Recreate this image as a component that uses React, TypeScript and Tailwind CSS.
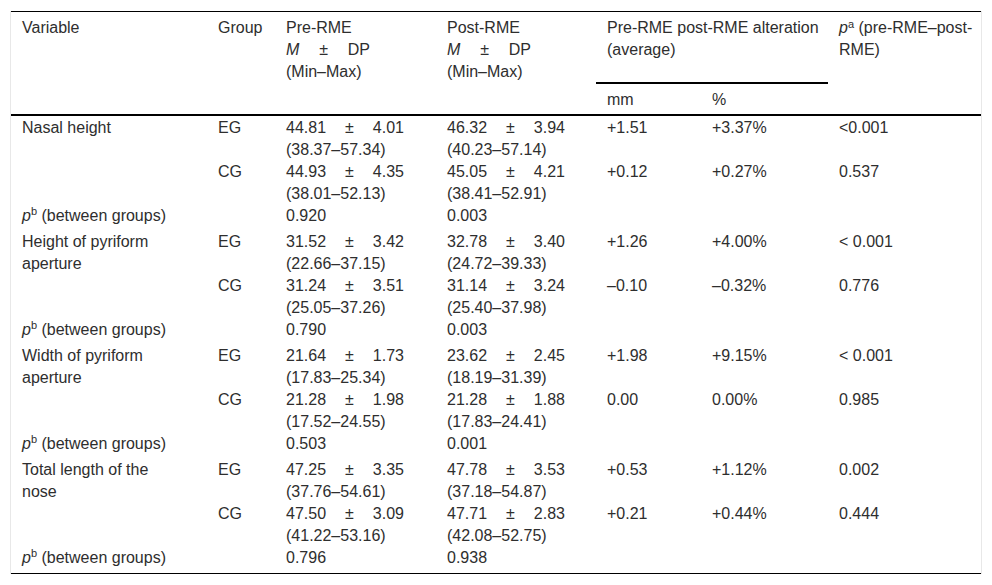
import React from 'react';

type Stat = { m: string; sd: string; range: string };
type GroupRow = { group: string; pre: Stat; post: Stat; mm: string; pct: string; p: string };
type Variable = { name: React.ReactNode; key: string; rows: GroupRow[]; pPre: string; pPost: string };

const data: Variable[] = [
  {
    key: 'nasal',
    name: 'Nasal height',
    rows: [
      { group: 'EG', pre: { m: '44.81', sd: '4.01', range: '(38.37–57.34)' }, post: { m: '46.32', sd: '3.94', range: '(40.23–57.14)' }, mm: '+1.51', pct: '+3.37%', p: '<0.001' },
      { group: 'CG', pre: { m: '44.93', sd: '4.35', range: '(38.01–52.13)' }, post: { m: '45.05', sd: '4.21', range: '(38.41–52.91)' }, mm: '+0.12', pct: '+0.27%', p: '0.537' },
    ],
    pPre: '0.920',
    pPost: '0.003',
  },
  {
    key: 'height',
    name: 'Height of pyriform aperture',
    rows: [
      { group: 'EG', pre: { m: '31.52', sd: '3.42', range: '(22.66–37.15)' }, post: { m: '32.78', sd: '3.40', range: '(24.72–39.33)' }, mm: '+1.26', pct: '+4.00%', p: '< 0.001' },
      { group: 'CG', pre: { m: '31.24', sd: '3.51', range: '(25.05–37.26)' }, post: { m: '31.14', sd: '3.24', range: '(25.40–37.98)' }, mm: '–0.10', pct: '–0.32%', p: '0.776' },
    ],
    pPre: '0.790',
    pPost: '0.003',
  },
  {
    key: 'width',
    name: 'Width of pyriform aperture',
    rows: [
      { group: 'EG', pre: { m: '21.64', sd: '1.73', range: '(17.83–25.34)' }, post: { m: '23.62', sd: '2.45', range: '(18.19–31.39)' }, mm: '+1.98', pct: '+9.15%', p: '< 0.001' },
      { group: 'CG', pre: { m: '21.28', sd: '1.98', range: '(17.52–24.55)' }, post: { m: '21.28', sd: '1.88', range: '(17.83–24.41)' }, mm: '0.00', pct: '0.00%', p: '0.985' },
    ],
    pPre: '0.503',
    pPost: '0.001',
  },
  {
    key: 'total',
    name: (
      <>
        Total length of the
        <br />
        nose
      </>
    ),
    rows: [
      { group: 'EG', pre: { m: '47.25', sd: '3.35', range: '(37.76–54.61)' }, post: { m: '47.78', sd: '3.53', range: '(37.18–54.87)' }, mm: '+0.53', pct: '+1.12%', p: '0.002' },
      { group: 'CG', pre: { m: '47.50', sd: '3.09', range: '(41.22–53.16)' }, post: { m: '47.71', sd: '2.83', range: '(42.08–52.75)' }, mm: '+0.21', pct: '+0.44%', p: '0.444' },
    ],
    pPre: '0.796',
    pPost: '0.938',
  },
];

const StatCell: React.FC<{ s: Stat }> = ({ s }) => (
  <div>
    <div className="flex w-[118px] justify-between">
      <span>{s.m}</span>
      <span>±</span>
      <span>{s.sd}</span>
    </div>
    <div>{s.range}</div>
  </div>
);

const HeadStat: React.FC<{ title: string }> = ({ title }) => (
  <div>
    <div>{title}</div>
    <div className="flex w-[84px] justify-between">
      <span className="italic">M</span>
      <span>±</span>
      <span>DP</span>
    </div>
    <div>(Min–Max)</div>
  </div>
);

const th = 'px-[11px] pt-[5px] text-left align-top font-normal';
const td = 'px-[11px] align-top';

export default function App() {
  return (
    <div className="min-h-[585px] bg-white px-[10px] pt-[11px] text-[16px] leading-[22px] text-[#2e2e2e]" style={{ fontFamily: '"Liberation Sans", Arial, sans-serif' }}>
      <div className="border-x border-[#e8e8e8]">
        <table className="w-full table-fixed border-collapse border-t border-b border-black">
          <colgroup>
            <col className="w-[196px]" />
            <col className="w-[68px]" />
            <col className="w-[161px]" />
            <col className="w-[160px]" />
            <col className="w-[105px]" />
            <col className="w-[127px]" />
            <col />
          </colgroup>
          <thead>
            <tr className="h-[71px]">
              <th rowSpan={2} className={`${th} border-b-2 border-black`}>Variable</th>
              <th rowSpan={2} className={`${th} border-b-2 border-black`}>Group</th>
              <th rowSpan={2} className={`${th} border-b-2 border-black`}><HeadStat title="Pre-RME" /></th>
              <th rowSpan={2} className={`${th} border-b-2 border-black`}><HeadStat title="Post-RME" /></th>
              <th colSpan={2} className={`${th} border-b-2 border-black`}>
                <span className="whitespace-nowrap">Pre-RME post-RME alteration</span>
                <br />
                (average)
              </th>
              <th rowSpan={2} className={`${th} border-b-2 border-black`}>
                <span className="whitespace-nowrap">
                  <span className="italic">p</span>
                  <sup className="text-[11px]">a</sup> (pre-RME–post-
                </span>
                <br />
                RME)
              </th>
            </tr>
            <tr className="h-[30px]">
              <th className={`${th} pb-[3px] border-b-2 border-black`}>mm</th>
              <th className={`${th} pb-[3px] border-b-2 border-black`}>%</th>
            </tr>
          </thead>
          <tbody>
            {data.map((v, vi) => {
              const last = vi === data.length - 1;
              const pb = last ? 'pb-[4px]' : 'pb-[3px]';
              return (
                <React.Fragment key={v.key}>
                  {v.rows.map((r, ri) => {
                    const pad = ri === 0 ? 'pt-[1px]' : '';
                    return (
                      <tr key={r.group}>
                        {ri === 0 && (
                          <td rowSpan={2} className={`${td} ${pad}`}>{v.name}</td>
                        )}
                        <td className={`${td} ${pad}`}>{r.group}</td>
                        <td className={`${td} ${pad}`}><StatCell s={r.pre} /></td>
                        <td className={`${td} ${pad}`}><StatCell s={r.post} /></td>
                        <td className={`${td} ${pad}`}>{r.mm}</td>
                        <td className={`${td} ${pad}`}>{r.pct}</td>
                        <td className={`${td} ${pad}`}>{r.p}</td>
                      </tr>
                    );
                  })}
                  <tr>
                    <td colSpan={2} className={`${td} ${pb}`}>
                      <span className="italic">p</span>
                      <sup className="text-[11px]">b</sup> (between groups)
                    </td>
                    <td className={`${td} ${pb}`}>{v.pPre}</td>
                    <td className={`${td} ${pb}`}>{v.pPost}</td>
                    <td className={`${td} ${pb}`} />
                    <td className={`${td} ${pb}`} />
                    <td className={`${td} ${pb}`} />
                  </tr>
                </React.Fragment>
              );
            })}
          </tbody>
        </table>
      </div>
    </div>
  );
}
